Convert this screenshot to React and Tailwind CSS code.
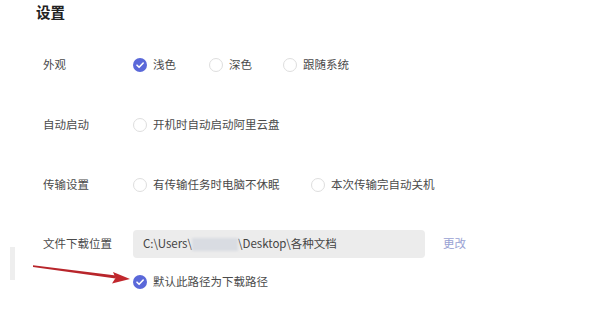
const Radio = ({ checked, label }) => (
  <div className="flex items-center">
    {checked ? (
      <span className="flex h-[14px] w-[14px] items-center justify-center rounded-full bg-[#5a68d9]">
        <svg viewBox="0 0 14 14" className="h-[14px] w-[14px]" fill="none">
          <path d="M4 7.2l2.1 2.1L10.2 5" stroke="#fff" strokeWidth="1.6" strokeLinecap="round" strokeLinejoin="round" />
        </svg>
      </span>
    ) : (
      <span className="h-[14px] w-[14px] rounded-full border border-[#dedede] bg-white" />
    )}
    <span className="ml-[6px] text-[11.5px] text-[#4a4a4a]">{label}</span>
  </div>
);

const Row = ({ label, height, children }) => (
  <div className={`flex items-center ${height}`}>
    <div className="w-[90px] shrink-0 text-[11.5px] text-[#4a4a4a]">{label}</div>
    {children}
  </div>
);

export default function App() {
  return (
    <div
      className="relative h-[331px] w-[600px] overflow-hidden bg-white"
      style={{ fontFamily: '"Noto Sans CJK SC", "Noto Sans", sans-serif' }}
    >
      <div className="flex h-[24px] items-center pl-[36px] text-[14.5px] font-bold text-[#222]">设置</div>

      <div className="mt-[11px] pl-[43px]">
        <Row label="外观" height="h-[60px]">
          <div className="w-[76px]"><Radio checked label="浅色" /></div>
          <div className="w-[74px]"><Radio label="深色" /></div>
          <Radio label="跟随系统" />
        </Row>
        <Row label="自动启动" height="h-[60px]">
          <Radio label="开机时自动启动阿里云盘" />
        </Row>
        <Row label="传输设置" height="h-[59px]">
          <div className="w-[178px]"><Radio label="有传输任务时电脑不休眠" /></div>
          <Radio label="本次传输完自动关机" />
        </Row>

        <div className="mt-[16px] flex items-center">
          <div className="w-[90px] shrink-0 text-[11.5px] text-[#4a4a4a]">文件下载位置</div>
          <div className="flex h-[28px] w-[292px] items-center rounded-[4px] bg-[#ececec] pl-[10px] text-[11.5px] text-[#444]">
            <span>C:\Users\</span>
            <span className="h-[13px] w-[46px] bg-[#d9dce2] blur-[1px]" />
            <span>\Desktop\各种文档</span>
          </div>
          <span className="ml-[18px] text-[11.5px] text-[#98a1d3]">更改</span>
        </div>

        <div className="ml-[90px] mt-[15px]">
          <Radio checked label="默认此路径为下载路径" />
        </div>
      </div>

      <div className="absolute left-[10px] top-[247px] h-[33px] w-[5px] bg-[#eeeeee]" />
      <svg className="absolute left-0 top-0" width="600" height="331" viewBox="0 0 600 331">
        <path d="M33 265.2 L116 275.6 L115.6 278.4 L33 267 Z" fill="#b8252b" />
        <path d="M130 279 L113 272 L115.5 278 L112 283.5 Z" fill="#c1272d" />
      </svg>
    </div>
  );
}
